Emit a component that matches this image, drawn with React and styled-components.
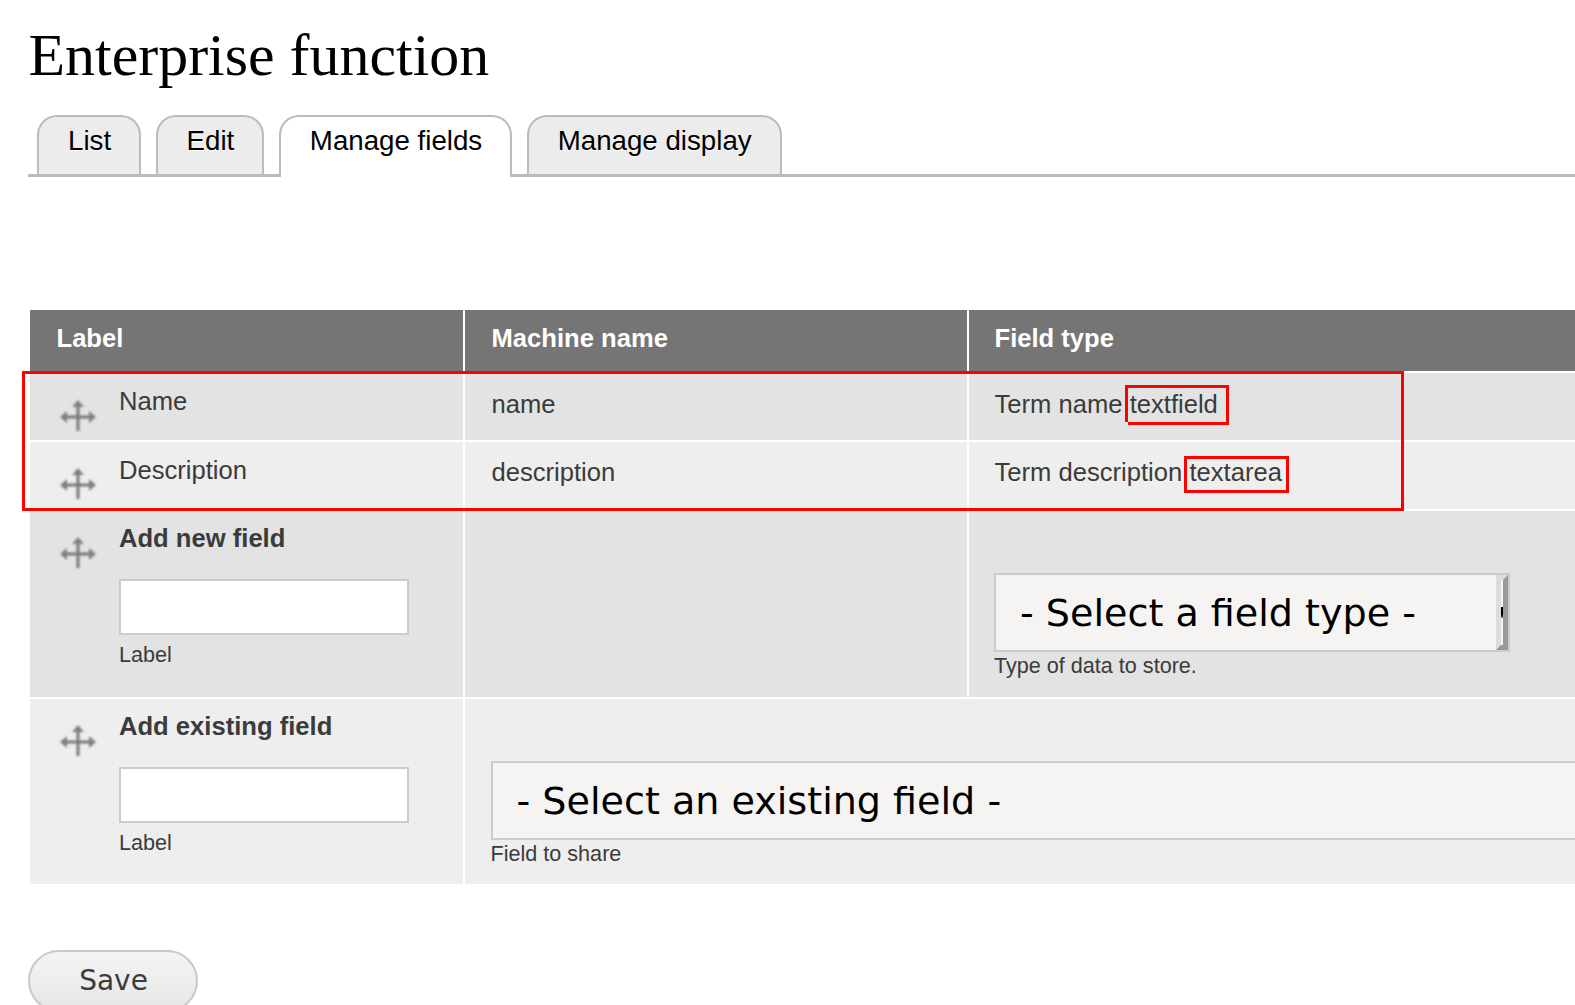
import React from "react";
import styled, { createGlobalStyle } from "styled-components";

const GlobalStyle = createGlobalStyle`
  html, body {
    margin: 0;
    padding: 0;
    background: #fff;
    height: 1005px;
    overflow: hidden;
    font-family: "Liberation Sans", Arial, sans-serif;
    color: #3b3b3b;
  }
`;

const Page = styled.div`
  width: 1575px;
  height: 1005px;
  overflow: hidden;
  padding-left: 28px;
  box-sizing: border-box;
`;

const Title = styled.h1`
  margin: 0;
  padding: 21px 0 0 0.5px;
  font-family: "Liberation Serif", "Times New Roman", serif;
  font-weight: 400;
  font-size: 59.9px;
  line-height: 69px;
  height: 69px;
  color: #000;
`;

const Tabs = styled.ul`
  list-style: none;
  margin: 25px 0 0;
  padding: 0 0 0 9px;
  display: flex;
  gap: 14.5px;
  height: 59px;
  border-bottom: 3px solid #bbb;
`;

const Tab = styled.li`
  box-sizing: border-box;
  height: ${(p) => (p.$active ? "62px" : "59px")};
  padding: 7px 28px 0 29px;
  border: 2px solid #bbb;
  border-bottom: none;
  border-radius: 20px 20px 0 0;
  background: ${(p) => (p.$active ? "#fff" : "#ececec")};
  font-size: 27.7px;
  line-height: 34px;
  color: #000;
  text-shadow: 0 1px 0 #fff;
`;

const TableWrap = styled.div`
  position: relative;
  margin: 133px 0 0 2px;
`;

const Table = styled.table`
  border-collapse: collapse;
  table-layout: fixed;
  width: 1800px;
  font-size: 25.6px;
`;

const HeadCell = styled.th`
  background: #757575;
  color: #fff;
  font-weight: 700;
  text-align: left;
  height: 62px;
  padding: 0 25.5px 4px ${(p) => p.$left || 26.5}px;
  border-right: 2px solid #fff;
  box-sizing: border-box;
`;

const Row = styled.tr`
  background: ${(p) => (p.$even ? "#eeeeee" : "#e3e3e3")};
  border-top: 2px solid #fff;
  height: ${(p) => p.$height}px;
`;

const Cell = styled.td`
  padding: 0 25.5px;
  padding-left: ${(p) => p.$left || 25.5}px;
  padding-bottom: ${(p) => p.$bottom || 0}px;
  border-right: 2px solid #fff;
  vertical-align: ${(p) => p.$align || "middle"};
  box-sizing: border-box;
`;

const LabelCell = styled.div`
  display: flex;
  align-items: flex-start;
  gap: 22px;
  padding-top: 12px;
`;

const DragHandle = styled.svg`
  flex: none;
  width: 38px;
  height: 34px;
  margin: ${(p) => (p.$raised ? 13 : 14)}px 0 0 3.5px;
  filter: blur(0.8px);
`;

const LabelBody = styled.div`
  display: flex;
  flex-direction: column;
  line-height: 32px;
`;

const Strong = styled.span`
  font-weight: 700;
  margin-top: -1px;
`;

const TextInput = styled.input`
  box-sizing: border-box;
  width: 290px;
  height: 56px;
  margin-top: 25px;
  background: #fff;
  border: 2px solid #ccc;
  border-radius: 0;
  outline: none;
`;

const Hint = styled.div`
  font-size: 21.6px;
  line-height: 26px;
  margin-top: ${(p) => p.$top || 0}px;
`;

const SelectBox = styled.div`
  box-sizing: border-box;
  display: flex;
  align-items: center;
  width: ${(p) => p.$width}px;
  height: 79px;
  padding-left: 24px;
  background: #f5f4f2;
  border: 2px solid #ccc;
  position: relative;
  font-family: "DejaVu Sans", sans-serif;
  font-size: 38.1px;
  color: #000;
`;

const SelectButton = styled.span`
  position: absolute;
  right: 0;
  top: 0;
  bottom: 0;
  width: 12px;
  box-sizing: border-box;
  background: #f5f4f2;
  border: 5px solid;
  border-color: #dcdcdc #999 #999 #dcdcdc;
  &::after {
    content: "";
    position: absolute;
    left: 0;
    top: 50%;
    width: 2px;
    height: 11px;
    margin-top: -6px;
    background: linear-gradient(#000 70%, #888);
  }
`;

const FieldType = styled.div`
  padding-top: 62px;
`;

const Marker = styled.span`
  position: relative;
  &::after {
    content: "";
    position: absolute;
    left: ${(p) => (p.$notched ? -2 : -5)}px;
    right: ${(p) => p.$right}px;
    top: ${(p) => p.$top}px;
    bottom: ${(p) => p.$bottom}px;
    border: 3px solid #f00;
    border-left-width: ${(p) => (p.$notched ? 0 : 3)}px;
  }
  &::before {
    content: "";
    display: ${(p) => (p.$notched ? "block" : "none")};
    position: absolute;
    left: -5px;
    width: 3px;
    top: ${(p) => p.$top}px;
    bottom: ${(p) => p.$bottom + 3}px;
    background: #f00;
  }
`;

const BigMarker = styled.div`
  position: absolute;
  left: -8px;
  top: 61px;
  width: 1382px;
  height: 140px;
  box-sizing: border-box;
  border: 3px solid #f00;
  pointer-events: none;
`;

const SaveButton = styled.button`
  display: block;
  margin: 66px 0 0;
  width: 170px;
  height: 62px;
  background: linear-gradient(#f4f4f4, #e6e6e6);
  border: 2px solid #c8c8c8;
  border-radius: 31px;
  font-family: "DejaVu Sans", sans-serif;
  font-size: 28px;
  color: #3b3b3b;
  padding: 0 0 2px 1px;
`;

function MoveIcon({ raised }) {
  return (
    <DragHandle viewBox="0 0 38 34" $raised={raised}>
      <path
        d="M19 3v29M3 18h32"
        stroke="#777"
        strokeWidth="3"
        fill="none"
      />
      <path
        d="M19 1l6 7h-12zM1 18l7-6v12zM37 18l-7-6v12z"
        fill="#808080"
      />
    </DragHandle>
  );
}

function App() {
  return (
    <Page>
      <GlobalStyle />
      <Title>Enterprise function</Title>
      <Tabs>
        <Tab>List</Tab>
        <Tab>Edit</Tab>
        <Tab $active>Manage fields</Tab>
        <Tab>Manage display</Tab>
      </Tabs>

      <TableWrap>
        <Table>
          <colgroup>
            <col style={{ width: 434 }} />
            <col style={{ width: 504 }} />
            <col />
          </colgroup>
          <thead>
            <tr>
              <HeadCell>Label</HeadCell>
              <HeadCell>Machine name</HeadCell>
              <HeadCell $left={25.5}>Field type</HeadCell>
            </tr>
          </thead>
          <tbody>
            <Row $height={69}>
              <Cell $align="top">
                <LabelCell>
                  <MoveIcon />
                  <LabelBody>Name</LabelBody>
                </LabelCell>
              </Cell>
              <Cell $left={26.5} $bottom={5}>
                name
              </Cell>
              <Cell $bottom={5}>
                Term name{" "}
                <Marker $notched $right={-11} $top={-5} $bottom={-7}>
                  textfield
                </Marker>
              </Cell>
            </Row>
            <Row $even $height={69}>
              <Cell $align="top">
                <LabelCell>
                  <MoveIcon raised />
                  <LabelBody>Description</LabelBody>
                </LabelCell>
              </Cell>
              <Cell $left={26.5} $bottom={7}>
                description
              </Cell>
              <Cell $bottom={7}>
                Term description{" "}
                <Marker $right={-7} $top={-2} $bottom={-7}>
                  textarea
                </Marker>
              </Cell>
            </Row>
            <Row $height={188}>
              <Cell $align="top">
                <LabelCell>
                  <MoveIcon raised />
                  <LabelBody>
                    <Strong>Add new field</Strong>
                    <TextInput />
                    <Hint $top={7}>Label</Hint>
                  </LabelBody>
                </LabelCell>
              </Cell>
              <Cell />
              <Cell $align="top" $left={25}>
                <FieldType>
                  <SelectBox $width={516}>
                    - Select a field type -
                    <SelectButton />
                  </SelectBox>
                  <Hint $top={1}>Type of data to store.</Hint>
                </FieldType>
              </Cell>
            </Row>
            <Row $even $height={186}>
              <Cell $align="top">
                <LabelCell>
                  <MoveIcon raised />
                  <LabelBody>
                    <Strong>Add existing field</Strong>
                    <TextInput />
                    <Hint $top={7}>Label</Hint>
                  </LabelBody>
                </LabelCell>
              </Cell>
              <Cell colSpan={2} $align="top">
                <FieldType>
                  <SelectBox $width={1200}>- Select an existing field -</SelectBox>
                  <Hint $top={1}>Field to share</Hint>
                </FieldType>
              </Cell>
            </Row>
          </tbody>
        </Table>
        <BigMarker />
      </TableWrap>

      <SaveButton>Save</SaveButton>
    </Page>
  );
}

export default App;
